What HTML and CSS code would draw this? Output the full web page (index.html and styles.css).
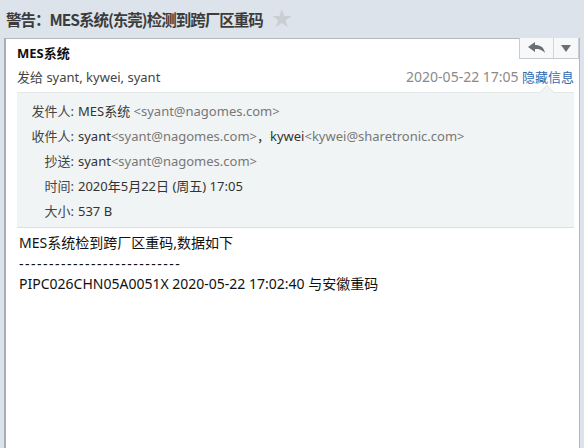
FILE: index.html
```html
<!DOCTYPE html>
<html lang="zh">
<head>
<meta charset="utf-8">
<link rel="stylesheet" href="styles.css">
</head>
<body>
<div class="page">
  <div class="subject">
    <h1 class="subject-text">警告：MES系统(东莞)检测到跨厂区重码</h1>
    <span class="star">★</span>
  </div>
  <div class="panel">
    <div class="actions">
      <span class="btn reply">
        <svg width="18" height="12" viewBox="0 0 18 12"><path d="M0 5 L7 0 L7 3 C12 3 16 5 17 11 C14 7.5 11 7 7 7 L7 10 Z" fill="#6b6f73"/></svg>
      </span>
      <span class="btn more">
        <svg width="10" height="7" viewBox="0 0 10 7"><path d="M0 0 L10 0 L5 7 Z" fill="#6b6f73"/></svg>
      </span>
    </div>
    <div class="from-name">MES系统</div>
    <div class="meta-row">
      <span class="sent-to">发给 syant, kywei, syant</span>
      <span class="meta-right"><span class="date">2020-05-22 17:05</span> <a class="toggle">隐藏信息</a></span>
    </div>
    <div class="details">
      <div class="drow"><span class="dl">发件人:</span><span class="dv">MES系统 <span class="mail">&lt;syant@nagomes.com&gt;</span></span></div>
      <div class="drow"><span class="dl">收件人:</span><span class="dv">syant<span class="mail">&lt;syant@nagomes.com&gt;</span>，kywei<span class="mail">&lt;kywei@sharetronic.com&gt;</span></span></div>
      <div class="drow"><span class="dl">抄送:</span><span class="dv">syant<span class="mail">&lt;syant@nagomes.com&gt;</span></span></div>
      <div class="drow"><span class="dl">时间:</span><span class="dv">2020年5月22日 (周五) 17:05</span></div>
      <div class="drow"><span class="dl">大小:</span><span class="dv">537 B</span></div>
    </div>
    <div class="body">
      <div>MES系统检到跨厂区重码,数据如下</div>
      <div class="dashes">---------------------------</div>
      <div>PIPC026CHN05A0051X 2020-05-22 17:02:40 与安徽重码</div>
    </div>
  </div>
</div>
</body>
</html>
```

FILE: styles.css
```css
* { box-sizing: border-box; }
html, body { margin: 0; height: 100%; }
body {
  background: #dde3ea;
  font-family: "Noto Sans", "Noto Sans CJK SC", sans-serif;
  font-size: 13px;
  color: #333;
}
.page {
  display: flex;
  flex-direction: column;
  height: 448px;
}
.subject {
  height: 38px;
  display: flex;
  align-items: center;
  padding-left: 6px;
  gap: 9px;
}
.subject-text {
  margin: 0;
  font-family: "Noto Sans CJK SC", sans-serif;
  font-size: 15.5px;
  font-weight: bold;
  color: #3c3c3c;
  letter-spacing: -1px;
}
.star {
  font-size: 20px;
  color: #c9ced3;
  line-height: 1;
}
.panel {
  position: relative;
  flex: 1;
  margin: 0 4px 0 4px;
  background: #fff;
  border: 1px solid #b3b8bd;
  border-left: 2px solid #a9aeb3;
  border-bottom: none;
  padding: 0 5px 0 11px;
}
.actions {
  position: absolute;
  top: -1px;
  right: 0;
  display: flex;
  border: 1px solid #c8ccd0;
  border-top: none;
  background: #f7f8f9;
  height: 21px;
}
.btn {
  display: flex;
  align-items: center;
  justify-content: center;
  height: 20px;
}
.reply { width: 34px; border-right: 1px solid #d3d6d9; }
.more { width: 24px; }
.from-name {
  font-weight: bold;
  color: #111;
  padding-top: 4px;
  height: 25px;
  line-height: 20px;
}
.meta-row {
  display: flex;
  justify-content: space-between;
  align-items: center;
  height: 24px;
  color: #444;
}
.date { color: #8a8a8a; font-size: 14px; }
.toggle { color: #2d6bb0; font-family: "Noto Sans CJK SC", sans-serif; }
.details {
  position: relative;
  margin-top: 4px;
  background: #f1f4f4;
  border-top: 1px solid #e3e7e7;
  border-bottom: 1px solid #dcdfdf;
  padding: 5px 0 4px 0;
}
.details::before {
  content: "";
  position: absolute;
  top: -8px;
  right: 19px;
  border: 8px solid transparent;
  border-top: none;
  border-bottom-color: #dfe3e3;
}
.details::after {
  content: "";
  position: absolute;
  top: -7px;
  right: 19px;
  border: 8px solid transparent;
  border-top: none;
  border-bottom-color: #f1f4f4;
}
.drow {
  display: flex;
  height: 25px;
  align-items: center;
}
.dl {
  width: 61px;
  text-align: right;
  color: #444;
  padding-right: 4px;
}
.dv { color: #333; }
.mail { color: #777; }
.body {
  padding-top: 5px;
  padding-left: 2px;
  color: #111;
  font-size: 14px;
  line-height: 20.5px;
}
.dashes { letter-spacing: 1.5px; }
```
